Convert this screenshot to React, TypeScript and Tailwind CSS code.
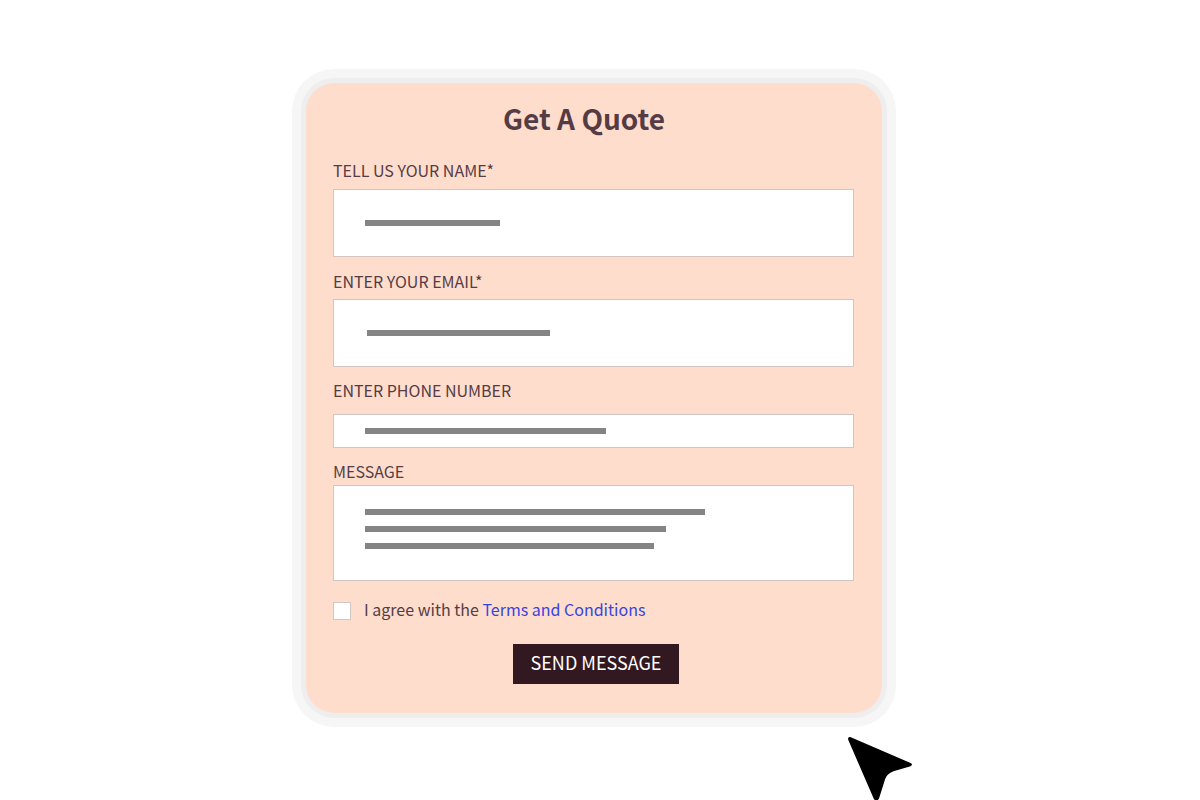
import type { ReactNode } from "react";

type FieldProps = {
  id: string;
  label: string;
  className: string;
  children: ReactNode;
  lines: ReactNode;
};

function Field({ id, label, className, children, lines }: FieldProps) {
  return (
    <div className={`flex flex-col ${className}`}>
      <label htmlFor={id} className="self-start text-[16px] leading-6">
        {label}
      </label>
      <div className="grid">
        {children}
        {lines}
      </div>
    </div>
  );
}

const control =
  "col-start-1 row-start-1 w-full rounded-none border border-[#d3c6c2] bg-white px-8 text-[16px] text-[#553c44] outline-none";
const overlay =
  "pointer-events-none col-start-1 row-start-1 flex flex-col";

export default function App() {
  return (
    <main className="flex min-h-screen items-start justify-center overflow-hidden bg-white pt-[83px] pr-3 font-['Noto_Sans_CJK_SC',sans-serif] text-[#553c44]">
      <form
        onSubmit={(e) => e.preventDefault()}
        className="relative flex w-full max-w-[576px] flex-col rounded-[28px] bg-[#ffddcd] pt-[15px] pr-7 pb-[29px] pl-[27px] shadow-[0_0_0_5px_#eeeeef,0_0_0_14px_#f6f6f6]"
      >
        <h1 className="pr-[19px] text-center text-[28px] leading-10 font-bold">
          Get A Quote
        </h1>

        <Field
          id="name"
          label="TELL US YOUR NAME*"
          className="mt-5 gap-[7px]"
          lines={
            <div className={`${overlay} items-start justify-center pl-8`}>
              <span className="h-[6px] w-[135px] bg-[#848484]" />
            </div>
          }
        >
          <input id="name" type="text" required className={`${control} h-[68px]`} />
        </Field>

        <Field
          id="email"
          label="ENTER YOUR EMAIL*"
          className="mt-3 gap-[6px]"
          lines={
            <div className={`${overlay} items-start justify-center pl-[34px]`}>
              <span className="h-[6px] w-[183px] bg-[#848484]" />
            </div>
          }
        >
          <input id="email" type="email" required className={`${control} h-[68px]`} />
        </Field>

        <Field
          id="phone"
          label="ENTER PHONE NUMBER"
          className="mt-[11px] gap-3"
          lines={
            <div className={`${overlay} items-start justify-center pl-8`}>
              <span className="h-[6px] w-[241px] bg-[#848484]" />
            </div>
          }
        >
          <input id="phone" type="tel" className={`${control} h-[34px]`} />
        </Field>

        <Field
          id="message"
          label="MESSAGE"
          className="mt-[11px] gap-[2px]"
          lines={
            <div className={`${overlay} items-start gap-[11px] pt-6 pl-8`}>
              <span className="h-[6px] w-[340px] bg-[#848484]" />
              <span className="h-[6px] w-[301px] bg-[#848484]" />
              <span className="h-[6px] w-[289px] bg-[#848484]" />
            </div>
          }
        >
          <textarea id="message" className={`${control} h-24 resize-none`} />
        </Field>

        <div className="mt-4 flex items-start gap-[13px] text-[16px] leading-6">
          <input
            id="agree"
            type="checkbox"
            className="mt-[5px] size-[18px] appearance-none border border-[#d3c6c2] bg-white checked:bg-[#321921]"
          />
          <p>
            <label htmlFor="agree">I agree with the </label>
            <a href="#terms" className="text-[#3644e0]">
              Terms and Conditions
            </a>
          </p>
        </div>

        <button
          type="submit"
          className="mt-[23px] ml-[5px] h-10 self-center bg-[#321921] px-[18px] pb-1 text-[18px] leading-6 text-white"
        >
          SEND MESSAGE
        </button>

        <svg
          aria-hidden="true"
          viewBox="0 0 66 66"
          className="absolute top-[653px] left-[541px] size-[66px]"
        >
          <path
            d="M3.2 1.1 L63.6 27 Q66.4 28.6 63.6 30.2 L46.5 35.2 Q39.8 37.6 38 43.5 L32 62.6 Q29.5 66.6 26.8 62.8 L1.2 3.8 Q0.6 0.6 3.2 1.1 Z"
            fill="#000"
          />
        </svg>
      </form>
    </main>
  );
}
